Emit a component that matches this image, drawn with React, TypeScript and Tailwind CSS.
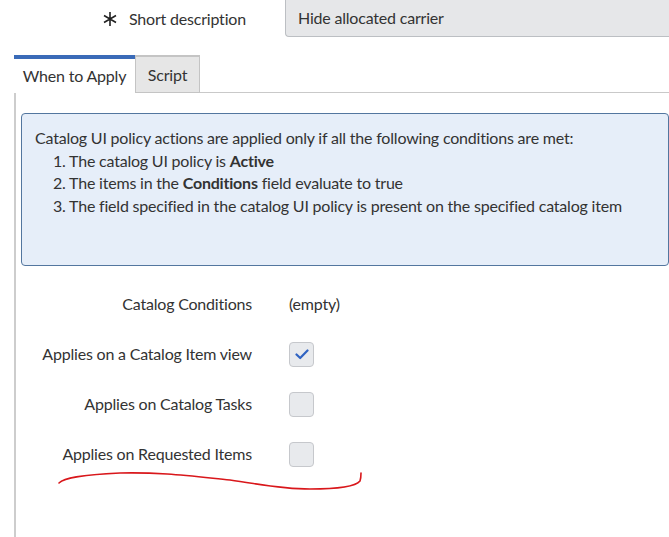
import React from 'react'

const font = { fontFamily: 'Lato, "Open Sans", sans-serif' }

function Checkbox({ checked }: { checked?: boolean }) {
  return (
    <div className="flex h-[25px] w-[25px] items-center justify-center rounded-[4px] border border-[#c6c8cc] bg-[#e8eaed]">
      {checked && (
        <svg width="14" height="11" viewBox="0 0 14 11" fill="none">
          <path d="M1.5 5.5 L5.2 9 L12.5 1.5" stroke="#2f63c2" strokeWidth="2.2" strokeLinecap="round" strokeLinejoin="round" />
        </svg>
      )}
    </div>
  )
}

function Row({ label, children }: { label: string; children: React.ReactNode }) {
  return (
    <div className="flex h-[50px] items-center">
      <div className="w-[252px] text-right text-[#333]">{label}</div>
      <div className="ml-[37px] flex items-center text-[#333]">{children}</div>
    </div>
  )
}

export default function App() {
  return (
    <div className="relative h-[537px] w-[669px] overflow-hidden bg-white text-[16px] tracking-[-0.2px]" style={font}>
      {/* Short description */}
      <div className="flex h-[37px] items-center">
        <div className="flex w-[285px] items-center pl-[102px]">
          <svg width="16" height="16" viewBox="0 0 16 16" className="mr-[11px]">
            <path d="M8 1 V15 M2 4.5 L14 11.5 M14 4.5 L2 11.5" stroke="#222" strokeWidth="1.6" />
          </svg>
          <span className="text-[#333]">Short description</span>
        </div>
        <div className="flex h-[37px] flex-1 items-center rounded-bl-[4px] border-b border-l border-[#bcbfc3] bg-[#e6e7e9] pl-[12px] text-[#333]">
          Hide allocated carrier
        </div>
      </div>

      {/* Tabs */}
      <div className="mt-[18px] flex pl-[14px]">
        <div className="flex h-[38px] w-[121px] items-center justify-center border-t-4 border-[#3a6bb8] bg-white text-[#333]">
          When to Apply
        </div>
        <div className="flex h-[38px] w-[65px] items-center justify-center border-x border-t-2 border-b border-[#c4c4c4] bg-[#e6e6e6] pt-[1px] text-[#333]">
          Script
        </div>
        <div className="flex-1 border-b border-[#c9c9c9]" />
      </div>

      {/* Panel */}
      <div className="ml-[14px] h-[444px] border-l-2 border-[#cdcdcd] pt-[20px] pl-[5px]">
        <div className="h-[153px] rounded-[4px] border border-[#53769f] bg-[#e6eef9] pt-[13px] pl-[13px] leading-[22.7px] text-[#333]">
          <div>Catalog UI policy actions are applied only if all the following conditions are met:</div>
          <div className="pl-[18px]">
            <div>1. The catalog UI policy is <b className="font-bold">Active</b></div>
            <div>2. The items in the <b className="font-bold">Conditions</b> field evaluate to true</div>
            <div>3. The field specified in the catalog UI policy is present on the specified catalog item</div>
          </div>
        </div>

        <div className="-ml-[21px] mt-[13px]">
          <Row label="Catalog Conditions">(empty)</Row>
          <Row label="Applies on a Catalog Item view"><Checkbox checked /></Row>
          <Row label="Applies on Catalog Tasks"><Checkbox /></Row>
          <Row label="Applies on Requested Items"><Checkbox /></Row>
        </div>
      </div>

      {/* red hand-drawn underline */}
      <svg className="absolute left-0 top-0" width="669" height="537" viewBox="0 0 669 537" fill="none">
        <path
          d="M59 483 C64 478 80 475 120 473 C160 472 190 476 230 480 C260 484 280 489 310 489 C340 489 356 486 360 481 C361 478 361 476 361 473"
          stroke="#d9171b"
          strokeWidth="1.6"
          strokeLinecap="round"
        />
      </svg>
    </div>
  )
}
